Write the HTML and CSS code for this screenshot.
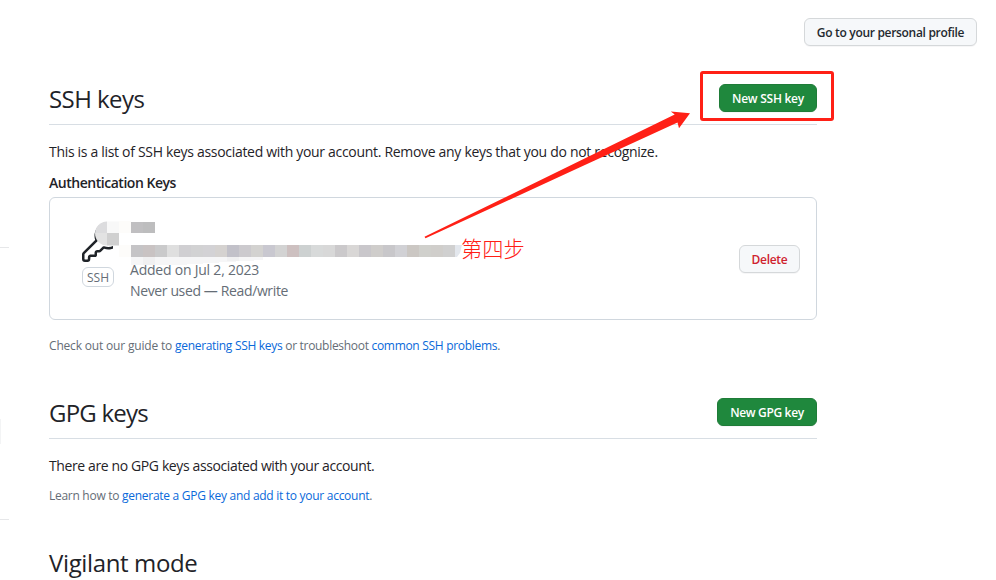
FILE: index.html
```html
<!DOCTYPE html>
<html lang="en">
<head>
<meta charset="utf-8">
<title>SSH and GPG keys</title>
<link rel="stylesheet" href="styles.css">
</head>
<body>
<div class="page">
  <aside class="rail"><i class="rule"></i><i class="active"></i><i class="rule"></i></aside>
  <div class="main">
    <div class="top"><button class="btn profile"><span class="t-profile">Go to your personal profile</span></button></div>
    <main class="content">
      <section class="ssh">
        <header class="head"><h2 class="t-ssh">SSH keys</h2><button class="btn primary"><span class="t-newssh">New SSH key</span></button></header>
        <p class="text"><span class="t-list">This is a list of SSH keys associated with your account. Remove any keys that you do not recognize.</span></p>
        <h3><span class="t-auth">Authentication Keys</span></h3>
        <div class="card">
          <div class="kind">
            <svg class="key" width="40" height="40" viewBox="0 0 24 24" fill="currentColor"><path d="M16.75 8.5a1.25 1.25 0 1 0 0-2.5 1.25 1.25 0 0 0 0 2.5Z"/><path d="M15.75 0a8.25 8.25 0 1 1-2.541 16.101l-1.636 1.636a1.744 1.744 0 0 1-1.237.513H9.25a.25.25 0 0 0-.25.25v1.448a.876.876 0 0 1-.256.619l-.214.213a.75.75 0 0 1-.545.22H5.25a.25.25 0 0 0-.25.25v1A1.75 1.75 0 0 1 3.25 24h-1.5A1.75 1.75 0 0 1 0 22.25v-2.836c0-.464.185-.908.513-1.236l7.386-7.388A8.249 8.249 0 0 1 15.75 0ZM9 8.25a6.733 6.733 0 0 0 .463 2.462.75.75 0 0 1-.168.804l-7.722 7.721a.25.25 0 0 0-.073.177v2.836c0 .138.112.25.25.25h1.5a.25.25 0 0 0 .25-.25v-1c0-.966.784-1.75 1.75-1.75H7.5v-1c0-.966.784-1.75 1.75-1.75h1.086a.25.25 0 0 0 .177-.073l1.971-1.972a.75.75 0 0 1 .804-.168A6.75 6.75 0 1 0 9 8.25Z"/></svg>
            <span class="tag"><span class="t-tag">SSH</span></span>
          </div>
          <div class="info"><span class="t-added">Added on Jul 2, 2023</span><span class="t-never">Never used — Read/write</span></div>
          <button class="btn danger"><span class="t-delete">Delete</span></button>
        </div>
        <p class="note"><span class="t-check"><span class="lead">Check out our guide to </span><a>generating SSH keys</a> or troubleshoot <a>common SSH problems</a>.</span></p>
      </section>
      <section class="gpg">
        <header class="head"><h2 class="t-gpg">GPG keys</h2><button class="btn primary"><span class="t-newgpg">New GPG key</span></button></header>
        <p class="text"><span class="t-there">There are no GPG keys associated with your account.</span></p>
        <p class="note"><span class="t-learn">Learn how to <a>generate a GPG key and add it to your account</a>.</span></p>
      </section>
      <section><h2 class="t-vig">Vigilant mode</h2></section>
    </main>
  </div>
  <svg class="marks" width="996" height="580" viewBox="0 0 996 580">
    <defs><clipPath id="bow"><path d="M119 221.500V245.500H107A12 12 0 0 1 107 221.500Z"/></clipPath></defs>
    <!-- pixelated cover over the key icon and its name -->
    <path fill="#fff" d="M107 221h16v29h-10v-4h-6z"/>
    <g clip-path="url(#bow)" shape-rendering="crispEdges">
      <path fill="#dcdcde" d="M95 221h12v12H95z"/><path fill="#f8f8f8" d="M107 221h12v12h-12z"/>
      <path fill="#e3e3e3" d="M95 233h12v13H95z"/><path fill="#d0d0d0" d="M107 233h12v13h-12z"/>
    </g>
    <g shape-rendering="crispEdges">
      <path fill="#fdfcfa" d="M119 221h12v12h-12zM119 245h12v12h-12z"/>
      <path fill="#c0bfc1" d="M131 222h12v11h-12z"/><path fill="#bdbdbe" d="M143 222h12v11h-12z"/>
      <path fill="#f6f6f7" d="M131 257h132v3l-36 2-48 3-36 0h-12z"/>
      <path fill="#f0f0f1" d="M143 257h12v8h-12zM227 257h12v4h-12z"/>
    </g>
    <g id="strip" shape-rendering="crispEdges"></g>
    <path fill="#e3e7ed" d="M455 245h7l-2 8-3 4h-2z"/>
    <rect x="701.5" y="72.500" width="131" height="47" rx="1.500" fill="none" stroke="#ff2016" stroke-width="3"/>
    <path fill="#ff2016" d="M424.500 236.800 580 160.700 674.700 114.600 670.800 111.400 690 113.200 679 128.200 677.500 122.500 580 167.300 425.500 238.300Z"/>
  </svg>
  <div class="step">第四步</div>
</div>
<script src="strip.js"></script>
</body>
</html>
```
FILE: strip.js
```js
// Pixelated fingerprint: one 12px cell per colour.
const cells = "c5c4c6 c9c3c3 cacacb dfdfdf d0cfd2 d2d2d3 d3d2d5 d5d2d0 c2c1c9 cccace d3d2d0 c9c8d0 d3d3d3 cdc0c0 cdd1d1 d8dada d8d8d8 cbc9cb d9d7d6 c9c7cb cfcdcb c8c7ca d1d1d5 cbc7c3 d0d0cc d0cecb d0d0d0".split(" ");
document.getElementById("strip").innerHTML = cells.map((c, i) =>
  `<rect x="${131 + i * 12}" y="245" width="12" height="12" fill="#${c}"/>`).join("");
```
FILE: styles.css
```css
* { box-sizing: border-box; }
body { margin: 0; width: 996px; height: 580px; overflow: hidden; background: #fff; color: #1f2328; font: 14px/21px "Open Sans", sans-serif; }
.page { position: relative; display: flex; width: 996px; height: 580px; }
.rail { width: 49px; padding-top: 247px; }
.rail i { display: block; }
.rule { width: 9px; height: 1px; background: #e6e7e9; }
.active { width: 1px; height: 25px; margin: 171px 0 75px; background: #f3f4f5; }
.main { flex: 1; }
.top { display: flex; justify-content: flex-end; padding: 18px 19px 0 0; }
.content { width: 768px; }
h2, h3, p { margin: 0; }
span { white-space: nowrap; }
h2 { font-size: 24px; font-weight: 400; line-height: 36px; white-space: nowrap; }
.btn { height: 28px; padding: 2px 0 0; border: 1px solid #d5d8da; border-radius: 6px; background: #f6f8fa; color: #24292f; font: 600 12px/20px "Open Sans", sans-serif; box-shadow: 0 1px 0 #1f23280a; }
.profile { width: 173px; }
.primary { width: 98px; border-color: #1f7c38; background: #1f883d; color: #fff; }
.gpg .primary { width: 100px; }
.danger { width: 61px; margin-left: auto; color: #cf222e; }
.head { display: flex; justify-content: space-between; height: 45px; border-bottom: 1px solid #d8dee4; }
.head h2 { padding-top: 1px; }
.head .btn { margin-top: 4px; }
.ssh { padding-top: 34px; }
.text { margin-top: 16px; }
h3 { margin-top: 10px; font-size: 14px; font-weight: 600; line-height: 21px; }
.card { display: flex; align-items: center; height: 123px; margin-top: 4px; padding: 0 16px 0 32px; border: 1px solid #d0d7de; border-radius: 6px; }
.kind { display: flex; flex-direction: column; align-items: flex-start; width: 48px; padding-bottom: 9px; }
.key { display: block; }
.tag { margin-top: 5px; width: 32px; height: 20px; border: 1px solid #d0d7de; border-radius: 6px; text-align: center; font-size: 12px; line-height: 19px; color: #656d76; }
.info { display: flex; flex-direction: column; align-items: flex-start; padding-top: 42px; color: #656d76; }
.note { margin-top: 17px; font-size: 12px; line-height: 18px; color: #656d76; }
a { color: #0969da; }
.gpg { padding-top: 39px; }
.gpg .note { margin-top: 11px; }
.gpg + section { padding-top: 40px; }
.t-profile { letter-spacing: -.31px; }
.t-ssh { letter-spacing: -.55px; }
.t-newssh { letter-spacing: -.27px; }
.t-list { letter-spacing: -.31px; }
.t-auth { letter-spacing: -.47px; }
.t-added { letter-spacing: -.22px; }
.t-never { letter-spacing: -.37px; }
.t-delete { letter-spacing: -.3px; }
.t-check { letter-spacing: -.3px; }
.lead { letter-spacing: -.18px; }
.t-gpg { letter-spacing: -.78px; }
.t-newgpg { letter-spacing: -.33px; }
.t-there { letter-spacing: -.385px; }
.t-learn { letter-spacing: -.28px; }
.t-vig { letter-spacing: -.37px; }
.marks { position: absolute; inset: 0; }
.step { position: absolute; left: 461px; top: 233px; color: #ff2016; font: 300 21.300px/30px "Noto Sans CJK SC", sans-serif; white-space: nowrap; }
```
